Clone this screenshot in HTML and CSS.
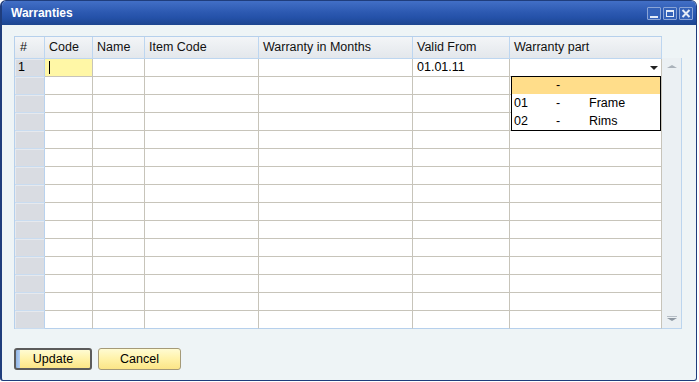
FILE: index.html
```html
<!DOCTYPE html>
<html><head><meta charset="utf-8">
<title>Warranties</title>
<link rel="stylesheet" href="styles.css">
</head>
<body>

<div class="window">

<div class="titlebar">
<span class="title">Warranties</span>
<div class="wbtns">
<span class="wbtn"><svg width="14" height="13" viewBox="0 0 14 13"><rect x="3" y="9" width="8" height="2" fill="#e4ecf8"/></svg></span>
<span class="wbtn"><svg width="14" height="13" viewBox="0 0 14 13"><rect x="3.5" y="3.5" width="7" height="6" fill="none" stroke="#e4ecf8"/><rect x="3" y="3" width="8" height="2" fill="#e4ecf8"/></svg></span>
<span class="wbtn"><svg width="14" height="13" viewBox="0 0 14 13"><path d="M3.5 3 L10.5 10 M10.5 3 L3.5 10" stroke="#e4ecf8" stroke-width="2"/></svg></span>
</div>
</div>

<div class="body">

<div class="gridwrap">
<div class="grid">
<div class="row head">
<span>#</span><span>Code</span><span>Name</span><span>Item Code</span><span>Warranty in Months</span><span>Valid From</span><span>Warranty part</span>
</div>
<div class="row">
<span class="rh">1</span><span class="cur"><i class="caret"></i></span><span></span><span></span><span></span><span>01.01.11</span>
<span class="combo"><i class="drop"></i>
<div class="list">
<div class="opt sel"><b></b><b>-</b><b></b></div>
<div class="opt"><b>01</b><b>-</b><b>Frame</b></div>
<div class="opt"><b>02</b><b>-</b><b>Rims</b></div>
</div>
</span>
</div>
<div class="row"><span class="rh"></span><span></span><span></span><span></span><span></span><span></span><span></span></div>
<div class="row"><span class="rh"></span><span></span><span></span><span></span><span></span><span></span><span></span></div>
<div class="row"><span class="rh"></span><span></span><span></span><span></span><span></span><span></span><span></span></div>
<div class="row"><span class="rh"></span><span></span><span></span><span></span><span></span><span></span><span></span></div>
<div class="row"><span class="rh"></span><span></span><span></span><span></span><span></span><span></span><span></span></div>
<div class="row"><span class="rh"></span><span></span><span></span><span></span><span></span><span></span><span></span></div>
<div class="row"><span class="rh"></span><span></span><span></span><span></span><span></span><span></span><span></span></div>
<div class="row"><span class="rh"></span><span></span><span></span><span></span><span></span><span></span><span></span></div>
<div class="row"><span class="rh"></span><span></span><span></span><span></span><span></span><span></span><span></span></div>
<div class="row"><span class="rh"></span><span></span><span></span><span></span><span></span><span></span><span></span></div>
<div class="row"><span class="rh"></span><span></span><span></span><span></span><span></span><span></span><span></span></div>
<div class="row"><span class="rh"></span><span></span><span></span><span></span><span></span><span></span><span></span></div>
<div class="row"><span class="rh"></span><span></span><span></span><span></span><span></span><span></span><span></span></div>
<div class="row"><span class="rh"></span><span></span><span></span><span></span><span></span><span></span><span></span></div>
</div>
<div class="vscroll"><i class="up"></i><i class="down"></i></div>
</div>

<div class="buttons">
<span class="btn focus">Update</span>
<span class="btn cancel">Cancel</span>
</div>

</div>
</div>

</body></html>
```

FILE: styles.css
```css
* {padding:0;margin:0;box-sizing:border-box;}
body {background:#fff;font-family:"Liberation Sans",Arial,sans-serif;font-size:12.5px;color:#000;width:699px;height:382px;overflow:hidden;}

.window {width:697px;height:381px;border:1px solid #1f3d7c;border-left-width:2px;border-radius:6px 6px 3px 3px;background:#eef4f6;display:flex;flex-direction:column;overflow:hidden;}

.titlebar {height:24px;flex:none;display:flex;align-items:center;justify-content:space-between;padding:0 3px 0 9px;background:linear-gradient(#426fc6,#2d5ab2 45%,#2451a8 70%,#1d468f);}
.title {color:#fff;font-weight:bold;font-size:12px;}
.wbtns {display:flex;gap:2px;padding-top:1px;}
.wbtn {width:14px;height:13px;display:block;border:1px solid #8aa4d6;background:#3462b9;border-radius:1px;}
.wbtn svg {display:block;margin:-1px;}

.body {flex:1;padding:11px 0 0 12px;}

.gridwrap {display:flex;}
.grid {border-left:1px solid #b6d0ec;border-top:1px solid #b6d0ec;}
.row {display:grid;grid-template-columns:30px 48px 52px 114px 154px 97px 152px;height:18px;}
.row > span {border-right:1px solid #c7c4ba;border-bottom:1px solid #c7c4ba;background:#fff;padding-left:4px;line-height:17px;white-space:nowrap;position:relative;}
.row:last-child > span {border-bottom-color:#b6d0ec;}

.row.head {height:22px;}
.row.head > span {background:linear-gradient(#f3f5f7,#e3e7ec);border-right-color:#bdd6f0;border-bottom-color:#bdd6f0;line-height:20px;color:#111;}
.row.head > span:first-child {padding-left:5px;}
.row.head > span:last-child {border-right-color:#bdd6f0;}

.row > span.rh {background:#d9dce2;border-right-color:#b9d2ee;border-bottom-color:#c9dcf0;box-shadow:inset 1px 1px 0 #e6e9ee;padding-left:3px;}
.row > span:last-child {border-right-color:#c7c4ba;}

.cur {background:#fff7a6 !important;}
.caret {position:absolute;left:4px;top:2px;width:1px;height:13px;background:#000;}

.drop {position:absolute;right:3px;top:7px;width:0;height:0;border-left:4px solid transparent;border-right:4px solid transparent;border-top:4px solid #222;}

.list {position:absolute;left:1px;top:17px;width:150px;height:55px;border:1px solid #000;background:#fff;z-index:2;}
.opt {display:grid;grid-template-columns:42px 33px 1fr;height:18px;line-height:18px;padding-left:2px;}
.opt b {font-weight:normal;}
.opt.sel {background:#ffdd8a;height:17px;line-height:17px;}

.vscroll {width:20px;height:271px;margin-top:22px;border-right:1px solid #bcd5ee;border-bottom:1px solid #bcd5ee;background:#ebf0f3;position:relative;}
.vscroll .up {position:absolute;left:5px;top:7px;border-left:5px solid transparent;border-right:5px solid transparent;border-bottom:3px solid #aab2ba;}
.vscroll .down {position:absolute;left:5px;bottom:7px;border-left:5px solid transparent;border-right:5px solid transparent;border-top:3px solid #8e98a2;}
.vscroll .down:before {content:"";position:absolute;left:-5px;top:-5px;width:10px;height:1px;background:#b6bec6;}

.buttons {display:flex;gap:6px;margin-top:19px;}
.btn {display:block;height:22px;line-height:20px;text-align:center;border:1px solid #a59a78;border-radius:3px;background:linear-gradient(#fffbd2,#fff2a8 50%,#fbe587);}
.btn.focus {width:78px;border:2px solid #5b5b5b;line-height:18px;background:linear-gradient(90deg,#8fb4e6 0,#b6d0f0 4px,transparent 4px),linear-gradient(#fffbd2,#fff2a8 50%,#fbe587);}
.btn.cancel {width:83px;}
```
